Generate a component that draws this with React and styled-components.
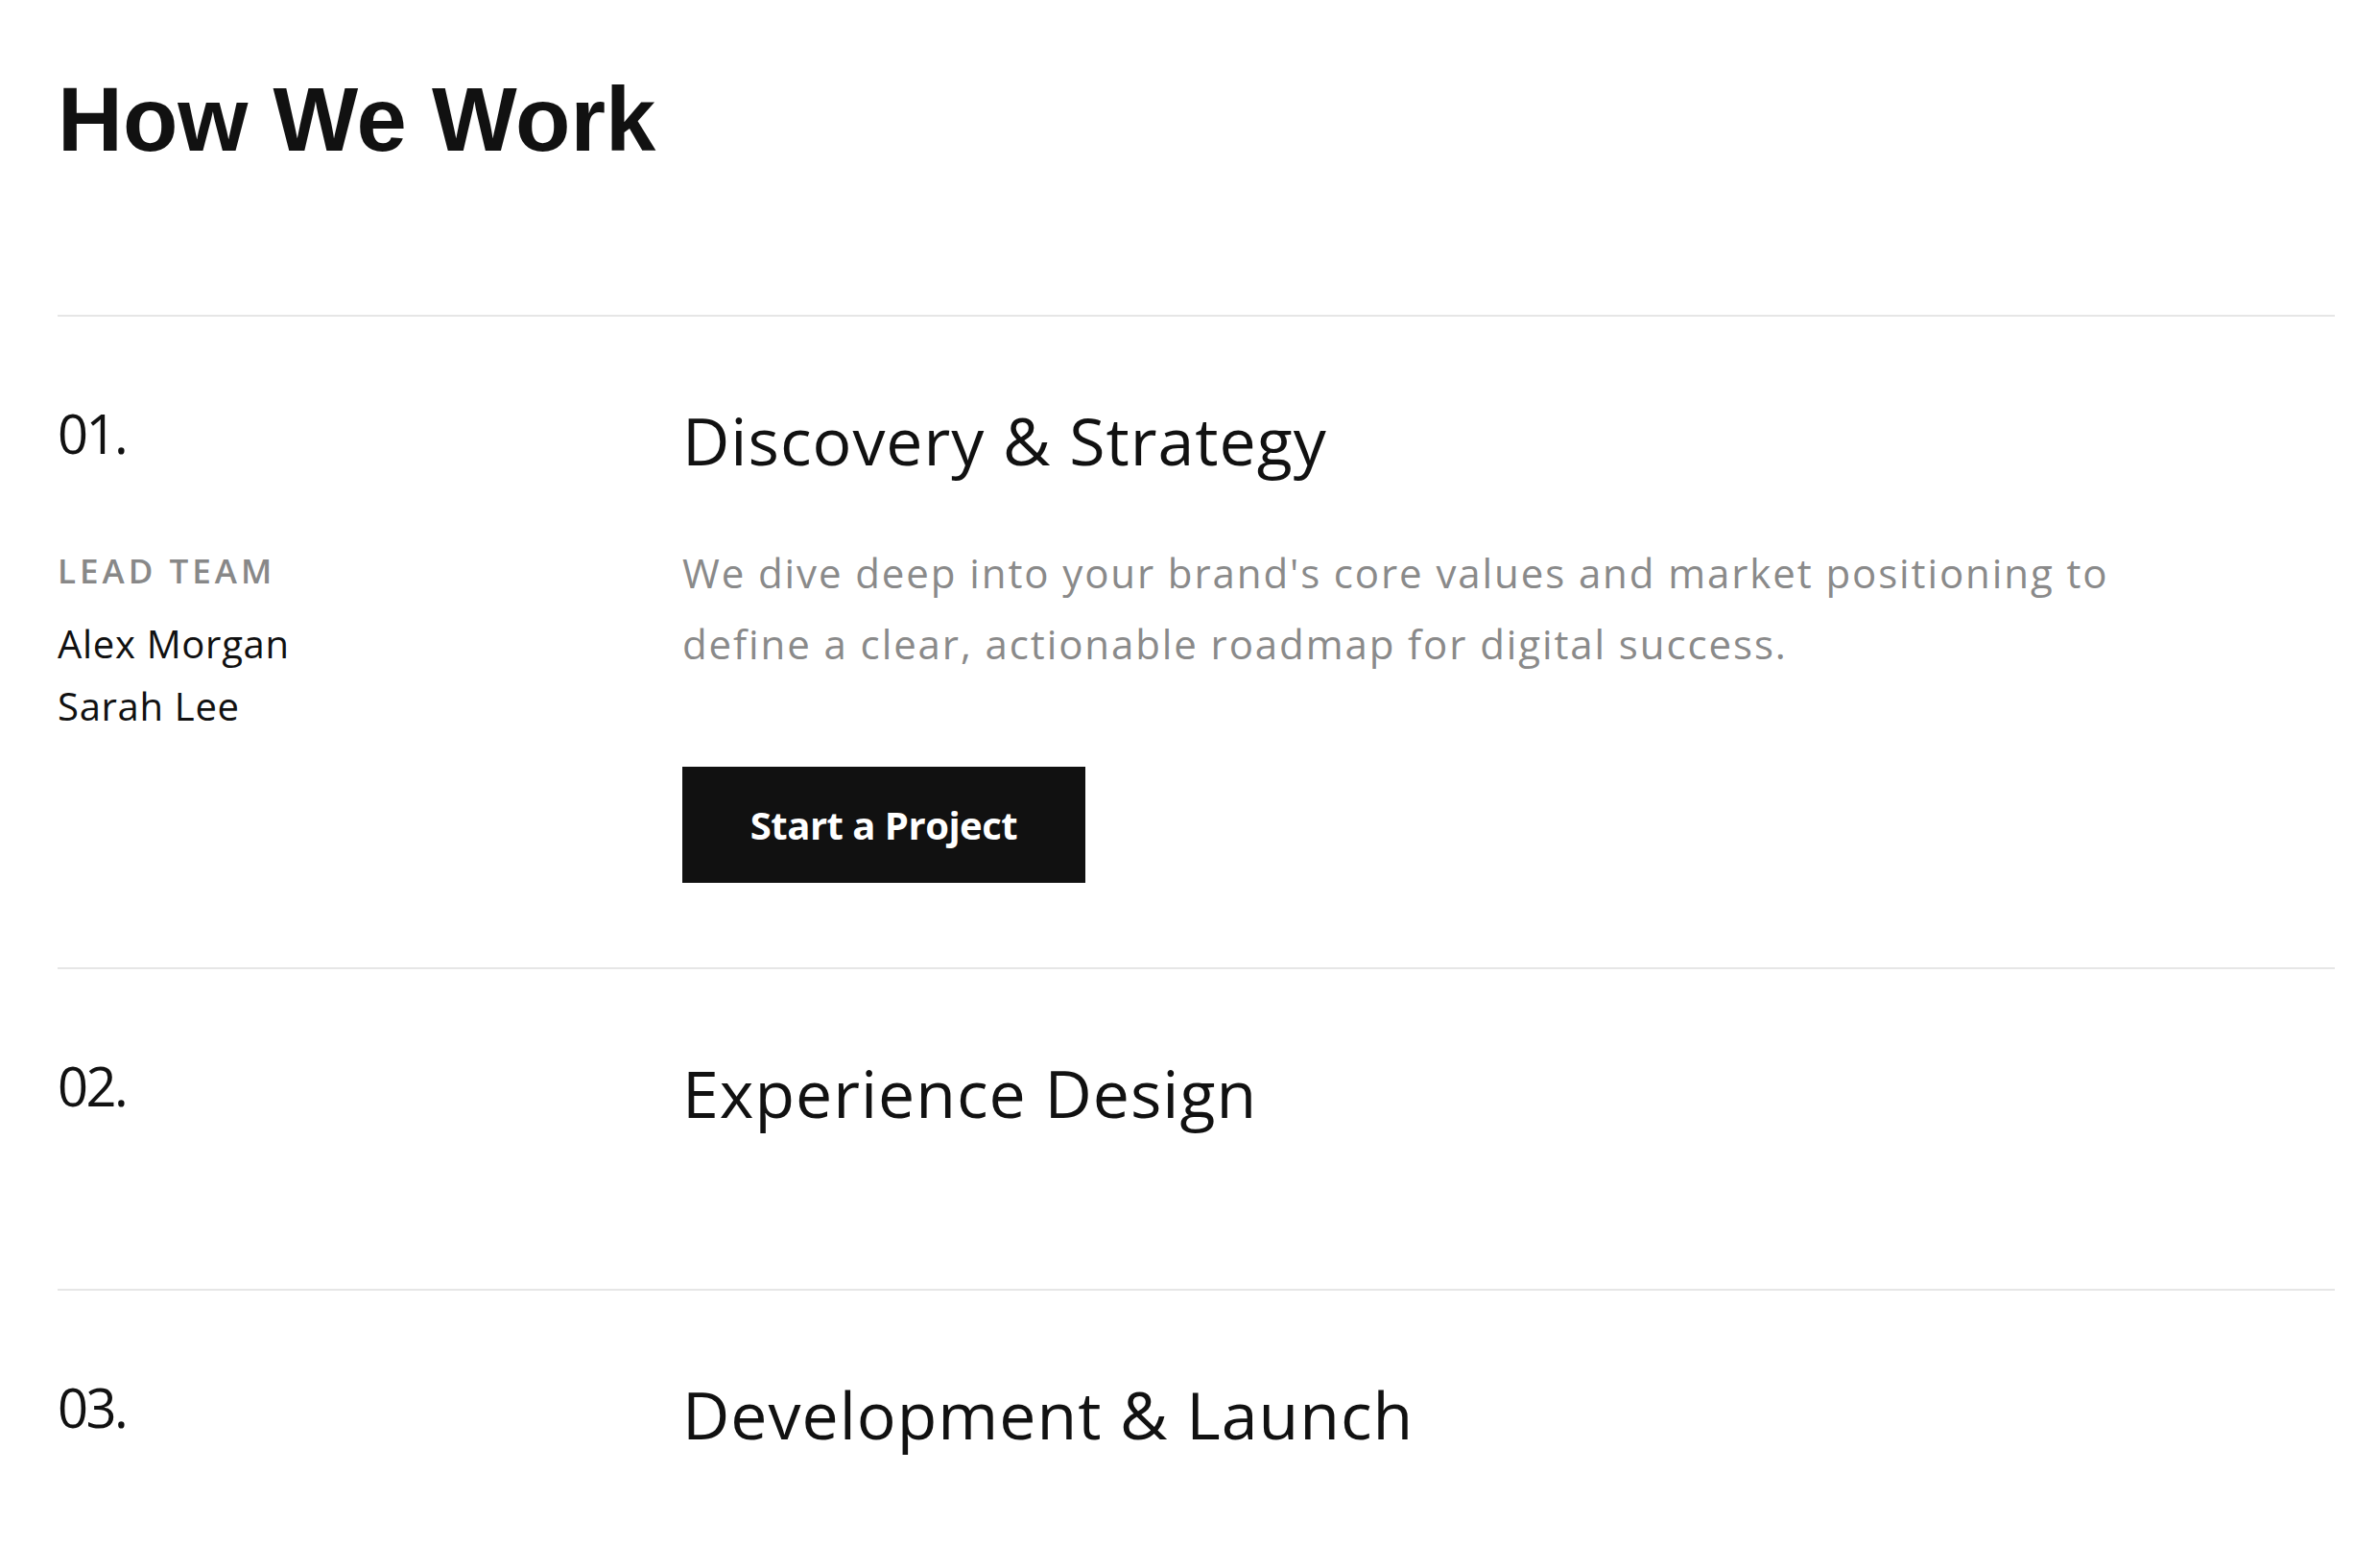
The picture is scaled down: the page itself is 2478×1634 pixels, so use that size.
import React from 'react';
import styled, { createGlobalStyle } from 'styled-components';

const GlobalStyle = createGlobalStyle`
    html, body {
        margin: 0;
        padding: 0;
        background: #fff;
    }
    body {
        font-family: "Open Sans", "Liberation Sans", sans-serif;
        color: #111;
    }
`

const steps = [
    {
        num : '01.',
        title : 'Discovery & Strategy',
        text : "We dive deep into your brand's core values and market positioning to define a clear, actionable roadmap for digital success.",
        team : ['Alex Morgan', 'Sarah Lee'],
        open : true,
    },
    {
        num : '02.',
        title : 'Experience Design',
    },
    {
        num : '03.',
        title : 'Development & Launch',
    },
];

export default function App() {
    return (
        <Page>
            <GlobalStyle />
            <Heading>How We Work</Heading>
            <List>
                {
                    steps.map(step => (
                        <Row key={step.num} open={step.open}>
                            <Side>
                                <Num>{step.num}</Num>
                                {
                                    step.open && <>
                                        <Label>Lead Team</Label>
                                        <Names>
                                            {step.team.map(name => <Name key={name}>{name}</Name>)}
                                        </Names>
                                    </>
                                }
                            </Side>
                            <Main>
                                <Title>{step.title}</Title>
                                {
                                    step.open && <>
                                        <Text>{step.text}</Text>
                                        <Button type="button">Start a Project</Button>
                                    </>
                                }
                            </Main>
                        </Row>
                    ))
                }
            </List>
        </Page>
    )
}

const Page = styled.div`
    padding: 78px 45px 0 60px;
`

const Heading = styled.h1`
    margin: 0;
    font-family: "Liberation Sans", Arial, sans-serif;
    font-size: 94px;
    font-weight: 700;
    line-height: 1;
    color: #111;
`

const List = styled.div`
    margin-top: 156px;
`

const Row = styled.div`
    display: grid;
    grid-template-columns: 651px 1fr;
    border-top: 2px solid #e6e6e6;
    padding: 93px 0 ${({open}) => open ? '88px' : '0'};
    min-height: ${({open}) => open ? '0' : '240px'};
`

const Side = styled.div`
    display: flex;
    flex-direction: column;
`

const Num = styled.div`
    font-size: 56px;
    line-height: 1;
    font-weight: 500;
    letter-spacing: -2.5px;
    color: #111;
`

const Label = styled.div`
    margin-top: 98px;
    font-size: 35px;
    line-height: 1;
    font-weight: 600;
    letter-spacing: 4px;
    text-transform: uppercase;
    color: #888;
`

const Names = styled.div`
    margin-top: 26px;
    display: flex;
    flex-direction: column;
`

const Name = styled.div`
    font-size: 40px;
    line-height: 65px;
    letter-spacing: 0.7px;
    color: #111;
`

const Main = styled.div`
    display: flex;
    flex-direction: column;
    align-items: flex-start;
`

const Title = styled.h2`
    margin: 2px 0 0;
    font-size: 68px;
    line-height: 1;
    font-weight: 400;
    letter-spacing: 1px;
    color: #111;
`

const Text = styled.p`
    margin: 67px 0 0;
    max-width: 1540px;
    font-size: 42px;
    line-height: 74px;
    letter-spacing: 1.9px;
    color: #8a8a8a;
`

const Button = styled.button`
    margin-top: 91px;
    width: 420px;
    height: 121px;
    padding: 0;
    border: 0;
    border-radius: 0;
    background: #111;
    color: #fff;
    font-family: inherit;
    font-size: 40px;
    font-weight: 700;
    letter-spacing: -0.5px;
    cursor: pointer;
`
